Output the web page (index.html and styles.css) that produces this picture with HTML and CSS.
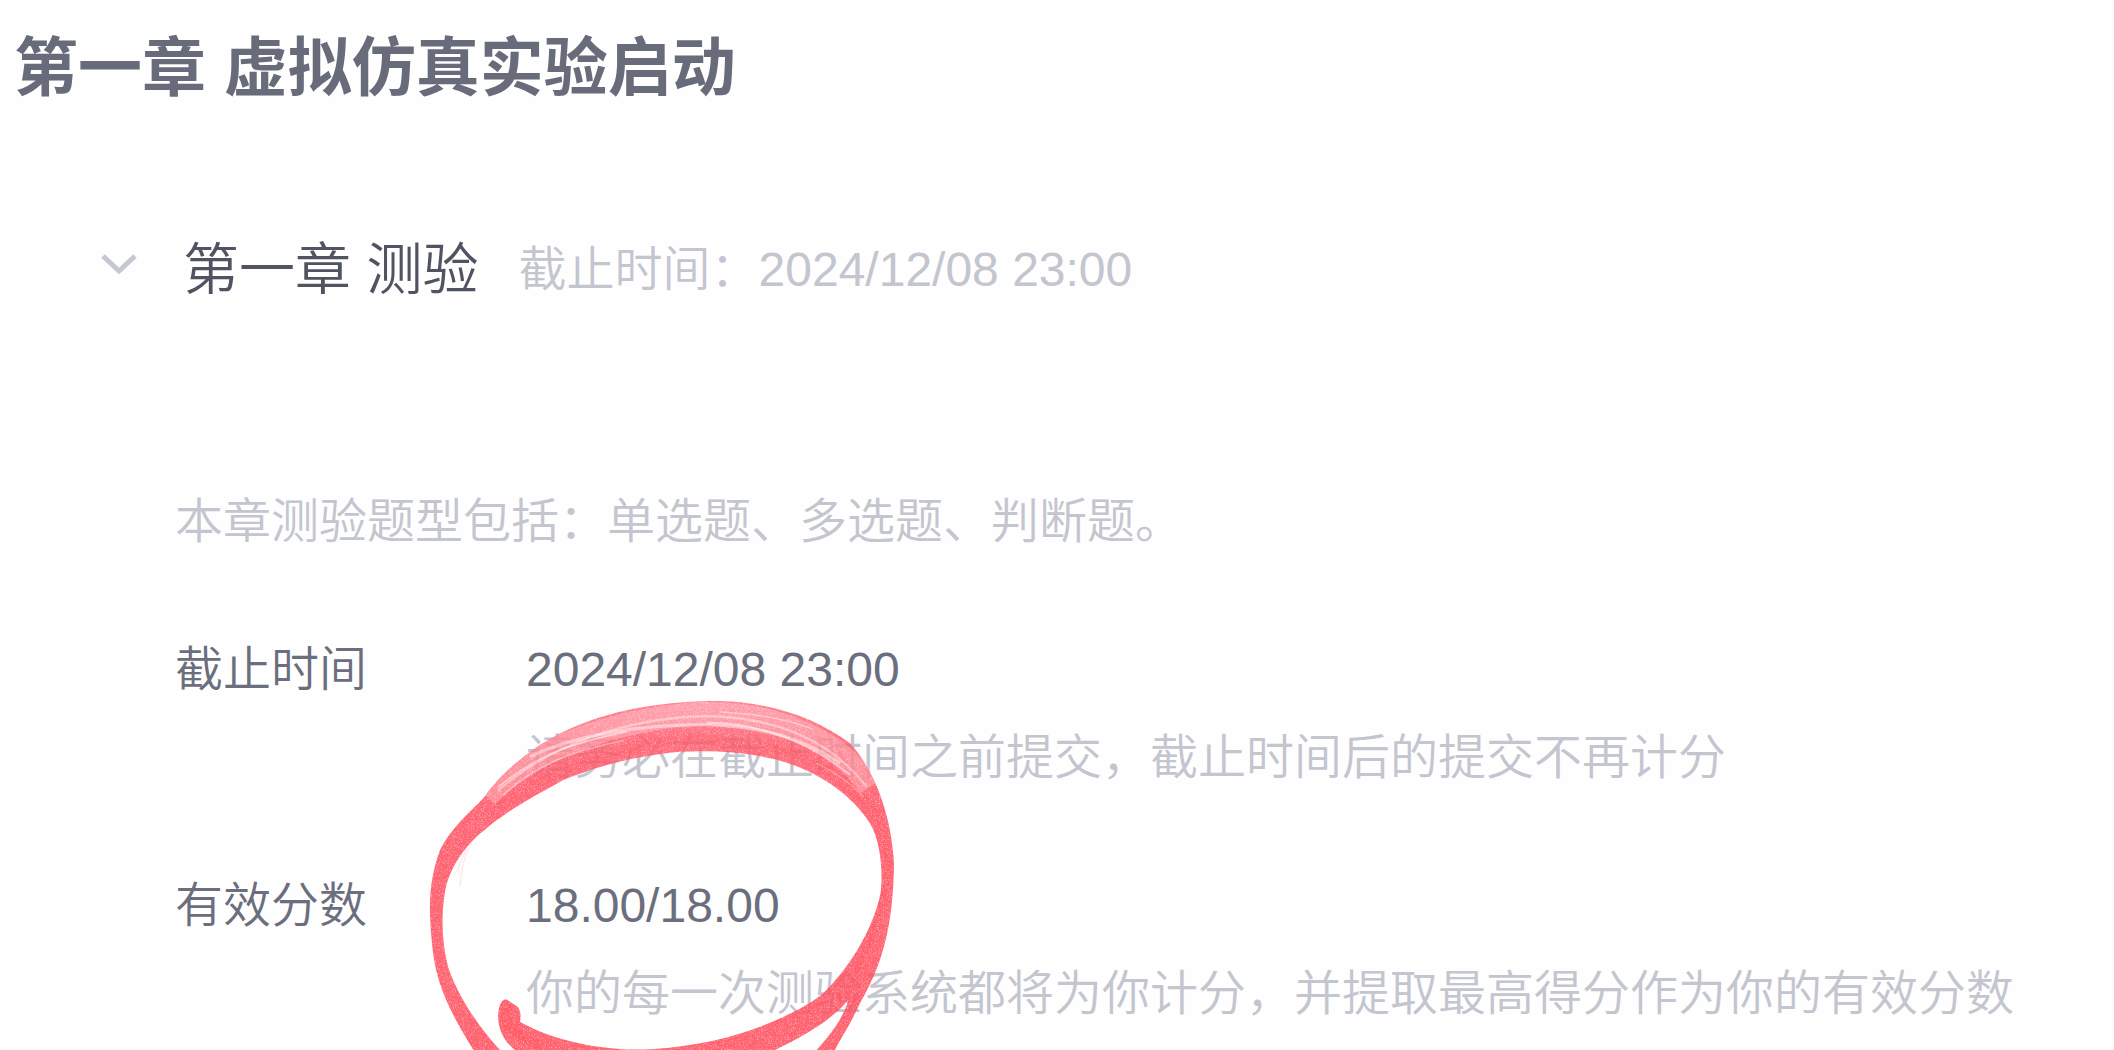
FILE: index.html
```
<!DOCTYPE html>
<html lang="zh-CN">
<head>
    <meta charset="UTF-8">
    <meta name="viewport" content="width=device-width, initial-scale=1.0">
    <title>第一章 虚拟仿真实验启动</title>
    <link rel="stylesheet" href="styles.css">
</head>
<body>

    <main class="chapter">
        <h1>第一章 虚拟仿真实验启动</h1>

        <section class="quiz">
            <div class="quiz-head">
                <button class="toggle" type="button" aria-label="收起" aria-expanded="true">
                    <svg viewBox="0 0 36 20" width="36" height="20"><path d="M2 2L18 17L34 2"/></svg>
                </button>
                <h2>第一章 测验</h2>
                <span class="deadline">截止时间：2024/12/08 23:00</span>
            </div>

            <div class="quiz-body">
                <p class="intro">本章测验题型包括：单选题、多选题、判断题。</p>

                <dl class="info">
                    <dt>截止时间</dt>
                    <dd>
                        <p>2024/12/08 23:00</p>
                        <p class="hint">请务必在截止时间之前提交，截止时间后的提交不再计分</p>
                    </dd>
                    <dt>有效分数</dt>
                    <dd class="score">
                        <p>18.00/18.00</p>
                        <p class="hint">你的每一次测验系统都将为你计分，并提取最高得分作为你的有效分数</p>

                        <!-- marker circle round the score -->
                        <svg class="marker" viewBox="0 0 1440 1080" aria-hidden="true">
                            <defs>
                                <linearGradient id="ink" x1="0" y1="0" x2="0" y2="1">
                                    <stop offset="0" stop-color="#ff7284"/>
                                    <stop offset="0.12" stop-color="#ff5f70"/>
                                    <stop offset="0.3" stop-color="#ff5364"/>
                                    <stop offset="1" stop-color="#ff505e"/>
                                </linearGradient>
                                <filter id="grain" x="0" y="0" width="1" height="1">
                                    <feTurbulence type="fractalNoise" baseFrequency="0.5" numOctaves="2" seed="4" result="noise"/>
                                    <feColorMatrix in="noise" type="matrix" values="0 0 0 0 0  0 0 0 0 0  0 0 0 0 0  0 0 0 -1.2 1.55" result="holes"/>
                                    <feComposite in="SourceGraphic" in2="holes" operator="in"/>
                                </filter>
                                <clipPath id="band">
                                    <path d="M190 325C240 255 285 220 330 185C430 115 520 85 600 65C710 40 800 33 900 33C1060 38 1190 85 1290 160C1365 240 1390 310 1405 370L1350 400C1280 290 1150 225 1050 205C960 182 860 182 780 185C620 200 520 235 430 270C330 325 250 370 200 415Z"/>
                                </clipPath>
                            </defs>
                            <g filter="url(#grain)">
                                <path fill="url(#ink)" d="M160 1080C80 950 45 870 36 760C24 640 28 570 60 480C90 420 140 375 190 325C240 255 285 220 330 185C430 115 520 85 600 65C710 40 800 33 900 33C1060 38 1190 85 1290 160C1365 240 1415 380 1422 520C1420 700 1390 820 1320 940C1290 1005 1262 1045 1245 1080L1190 1080C1230 1035 1270 985 1285 930C1240 985 1160 1035 1065 1080L285 1080C240 1045 232 1000 235 965C240 935 250 925 262 930L290 948C303 960 303 975 300 995C360 1030 460 1065 590 1076C650 1082 740 1080 880 1052C1020 1020 1150 960 1210 910C1300 820 1360 710 1382 610C1390 540 1380 450 1350 400C1280 290 1150 225 1050 205C960 182 860 182 780 185C620 200 520 235 430 270C330 325 250 370 200 415C140 460 90 530 76 600C62 680 66 760 84 830C110 910 170 1005 240 1080Z"/>
                                <g class="streaks" clip-path="url(#band)">
                                    <path stroke-width="70" opacity="0.25" d="M200 320C330 180 580 86 850 70C1090 70 1260 160 1350 290"/>
                                    <path stroke-width="7" opacity="0.4" d="M235 300C400 160 620 84 860 78C1070 82 1230 150 1340 290"/>
                                    <path stroke-width="10" opacity="0.45" d="M330 200C480 130 680 102 870 104C1040 112 1160 150 1260 220"/>
                                    <path stroke-width="5" opacity="0.5" d="M235 290C350 200 430 165 620 125M860 98C1000 95 1160 150 1290 255"/>
                                    <path stroke-width="4" opacity="0.4" d="M250 315C350 220 470 180 610 152M900 66C1030 72 1110 90 1180 118M1190 220C1250 250 1300 285 1330 320"/>
                                </g>
                                <path class="deep" opacity="0.25" stroke-width="30" d="M215 370C340 265 520 195 700 158C820 140 970 150 1100 185C1220 220 1330 310 1385 410"/>
                                <path class="deep" opacity="0.7" stroke-width="30" d="M258 950C250 1000 280 1035 345 1060"/>
                                <path class="deep" opacity="0.4" stroke-width="20" d="M1402 440C1410 600 1370 730 1310 840"/>
                                <path class="wisp" d="M155 460C135 490 125 530 120 590M140 475C125 505 120 525 112 545"/>
                            </g>
                        </svg>
                    </dd>
                </dl>
            </div>
        </section>
    </main>

</body>
</html>
```
FILE: styles.css
```
body {
    font-family: "Liberation Sans", "Noto Sans CJK SC", sans-serif;
    font-size: 48px;
    font-weight: 350;
    line-height: 72px;
    background-color: #fefefe;
    color: #6b6e7d;
    margin: 0;
}
h1, h2, p, dl, dd {
    margin: 0;
}
.chapter {
    box-sizing: border-box;
    min-height: 100vh;
    padding: 24px 14px 0;
    overflow: hidden;
}
h1 {
    font-size: 64px;
    font-weight: bold;
    line-height: 88px;
    color: #686b7a;
}
.quiz {
    padding: 122px 0 0 87px;
}
.quiz-head {
    display: flex;
    align-items: center;
}
.toggle {
    display: flex;
    width: 82px;
    padding: 0 0 12px;
    border: 0;
    background: none;
    cursor: pointer;
}
.toggle path {
    fill: none;
    stroke: #c6c8d1;
    stroke-width: 5;
}
h2 {
    font-size: 56px;
    font-weight: 350;
    color: #505462;
    margin-right: 40px;
}
.deadline, .intro, .hint {
    color: #c3c5cf;
}
.quiz-body {
    padding: 180px 0 0 74px;
}
.info {
    display: grid;
    grid-template-columns: 351px 1fr;
    row-gap: 76px;
    margin-top: 76px;
}
.hint {
    margin-top: 16px;
}
.score {
    position: relative;
}
.marker {
    position: absolute;
    left: -106px;
    top: -180px;
    width: 480px;
    height: 360px;
    opacity: 0.9;
    pointer-events: none;
}
.streaks path {
    fill: none;
    stroke: #ffffff;
}
.deep {
    fill: none;
    stroke: #ff4650;
    stroke-linecap: round;
}
.wisp {
    fill: none;
    stroke: #ff9aa6;
    stroke-width: 3;
    opacity: 0.4;
}
```
